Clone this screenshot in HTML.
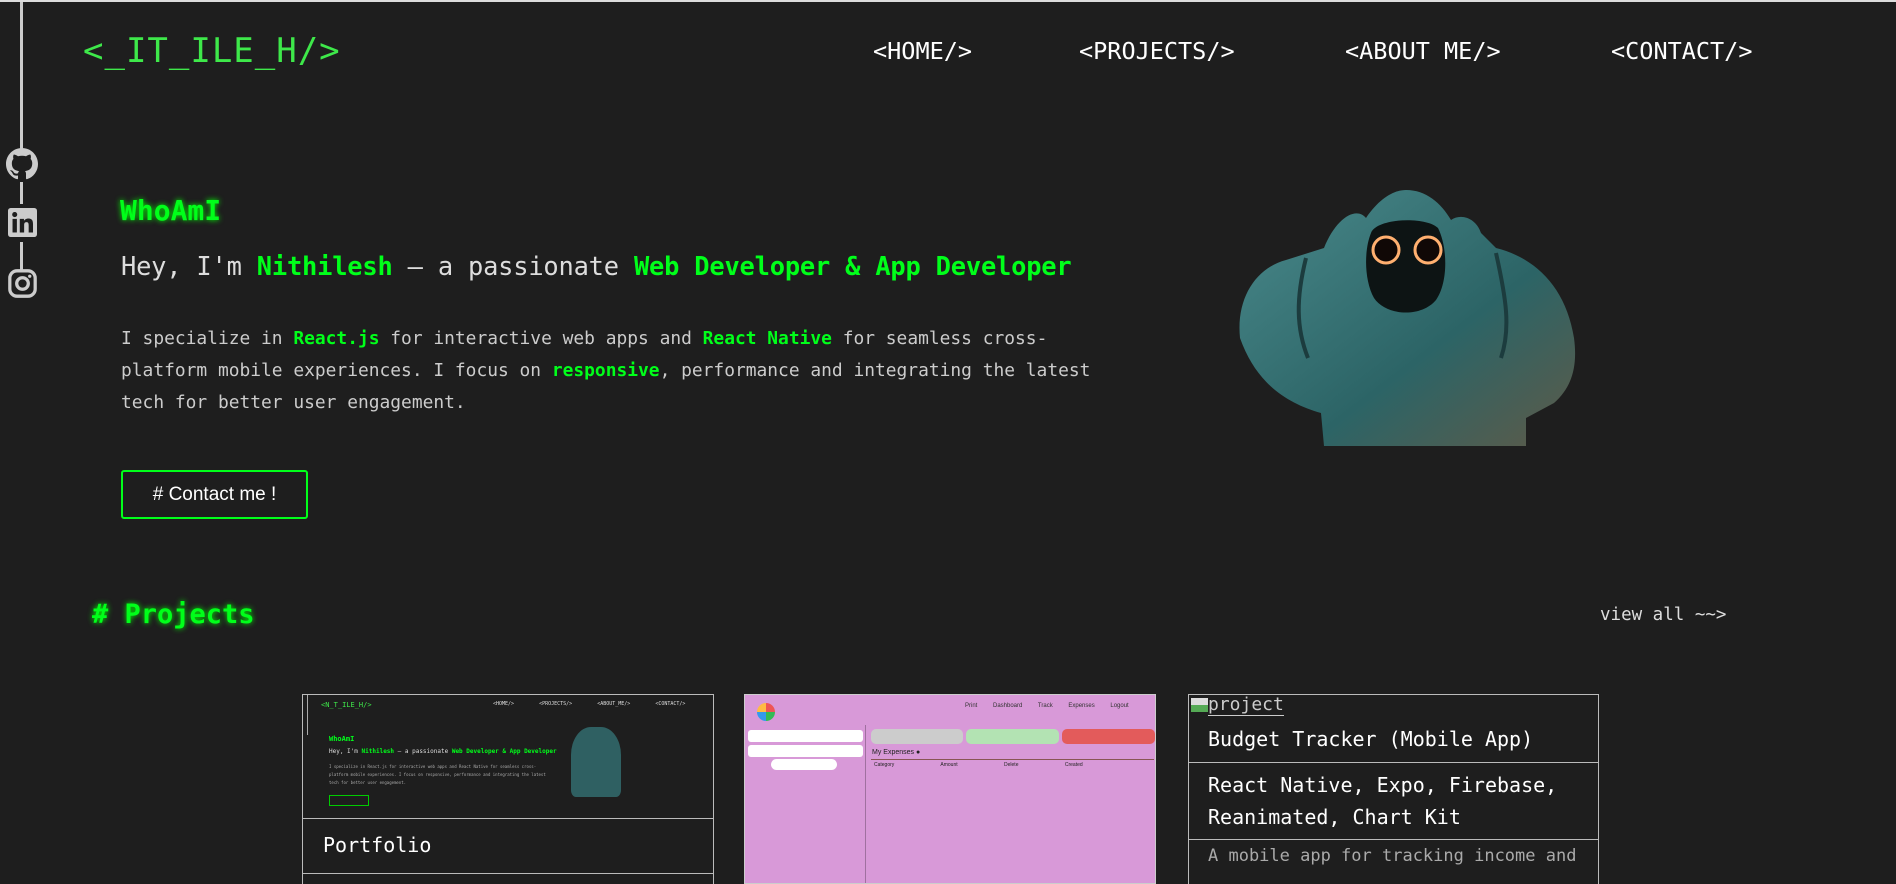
<!DOCTYPE html>
<html><head><meta charset="utf-8"><style>
*{margin:0;padding:0;box-sizing:border-box}
body{width:1896px;height:871px;overflow:hidden;background:#1e1e1e;font-family:"DejaVu Sans Mono","Liberation Mono",monospace;color:#ddd;position:relative;border-top:2px solid #ddd}
.a{position:absolute;white-space:nowrap}
.g{color:#00ff1a;font-weight:bold}
.nav{font-size:23.5px;color:#fff;top:35px;letter-spacing:0px}
</style></head><body>
<div class="a" style="left:20px;top:0;width:3px;height:147px;background:#ccc"></div>
<div class="a" style="left:20px;top:180px;width:3px;height:22px;background:#ccc"></div>
<div class="a" style="left:20px;top:240px;width:3px;height:28px;background:#ccc"></div>
<svg class="a" style="left:6px;top:146px" width="32" height="32" viewBox="0 0 16 16"><path fill="#ccc" d="M8 0C3.58 0 0 3.58 0 8c0 3.540 2.29 6.53 5.47 7.59.4.07.55-.17.55-.38 0-.19-.01-.82-.01-1.49-2.01.37-2.530-.49-2.69-.94-.09-.23-.48-.94-.82-1.130-.28-.15-.68-.52-.01-.53.63-.01 1.08.58 1.23.82.72 1.21 1.87.87 2.33.66.07-.52.28-.87.51-1.07-1.78-.2-3.64-.89-3.64-3.95 0-.87.31-1.59.82-2.150-.08-.2-.36-1.02.08-2.12 0 0 .67-.21 2.2.82.64-.18 1.32-.27 2-.27.68 0 1.36.09 2 .27 1.53-1.04 2.2-.82 2.2-.82.44 1.1.16 1.92.08 2.12.51.56.82 1.27.82 2.15 0 3.07-1.87 3.75-3.65 3.95.29.25.54.73.54 1.48 0 1.07-.01 1.93-.01 2.2 0 .21.15.46.55.38A8.013 8.013 0 0016 8c0-4.42-3.58-8-8-8z"/></svg>
<svg class="a" style="left:8px;top:206px" width="29" height="29" viewBox="0 0 16 16"><rect width="16" height="16" rx="1.5" fill="#ccc"/><rect x="2.5" y="6" width="2.4" height="7.5" fill="#1e1e1e"/><circle cx="3.7" cy="3.6" r="1.4" fill="#1e1e1e"/><path d="M6.5 6h2.3v1.1c.4-.7 1.3-1.3 2.5-1.3 2.1 0 2.5 1.4 2.5 3.2v4.5h-2.4V9.6c0-.9-.1-1.8-1.2-1.8s-1.3.8-1.3 1.7v4H6.5z" fill="#1e1e1e"/></svg>
<svg class="a" style="left:8px;top:267px" width="29" height="29" viewBox="0 0 16 16"><rect x="1" y="1" width="14" height="14" rx="4" fill="none" stroke="#ccc" stroke-width="1.8"/><circle cx="8" cy="8" r="3.2" fill="none" stroke="#ccc" stroke-width="1.8"/><circle cx="12" cy="4" r=".9" fill="#ccc"/></svg>

<div class="a" style="left:83px;top:29px;font-size:34px;color:#3ee84a;letter-spacing:1px">&lt;_IT_ILE_H/&gt;</div>
<div class="a nav" style="left:873px">&lt;HOME/&gt;</div>
<div class="a nav" style="left:1079px">&lt;PROJECTS/&gt;</div>
<div class="a nav" style="left:1345px">&lt;ABOUT ME/&gt;</div>
<div class="a nav" style="left:1611px">&lt;CONTACT/&gt;</div>

<div class="a g" style="left:120px;top:192px;font-size:28px;text-shadow:0 0 6px #0f0">WhoAmI</div>
<div class="a" style="left:121px;top:249px;font-size:25.4px;color:#ddd;letter-spacing:-0.2px">Hey, I'm <span class="g">Nithilesh</span> – a passionate <span class="g">Web Developer &amp; App Developer</span></div>
<div class="a" style="left:121px;top:321px;font-size:17.9px;line-height:32px;color:#ccc;white-space:normal;width:1100px">I specialize in <span class="g">React.js</span> for interactive web apps and <span class="g">React Native</span> for seamless cross-<br>platform mobile experiences. I focus on <span class="g">responsive</span>, performance and integrating the latest<br>tech for better user engagement.</div>
<div class="a" style="left:121px;top:468px;width:187px;height:49px;border:2px solid #00ff1a;border-radius:3px;color:#fff;font-family:'Liberation Sans',sans-serif;font-size:19px;text-align:center;line-height:45px">#&nbsp;Contact me !</div>

<svg class="a" style="left:1236px;top:186px" width="342" height="258" viewBox="0 0 342 258">
<defs><linearGradient id="b" x1="0" y1="0" x2="1" y2="1"><stop offset="0" stop-color="#4a8a8c"/><stop offset=".6" stop-color="#2c6466"/><stop offset="1" stop-color="#5e5a48"/></linearGradient></defs>
<path d="M4 150 C0 110 20 80 50 72 L88 60 C100 30 120 18 130 30 C145 8 160 2 170 2 C190 2 205 15 215 32 C225 25 240 30 245 45 L260 60 C300 70 330 100 338 150 C342 180 335 200 318 215 L290 230 L290 258 L88 258 L85 225 C50 215 20 195 4 150Z" fill="url(#b)"/>
<path d="M70 70 C60 110 60 140 72 170" stroke="#1c3c3e" stroke-width="4" fill="none"/>
<path d="M260 65 C270 110 275 140 265 170" stroke="#1c3c3e" stroke-width="4" fill="none"/>
<path d="M135 45 C140 30 190 28 202 40 C212 60 212 95 200 112 C185 130 150 128 138 110 C128 92 128 62 135 45Z" fill="#0d1414"/>
<circle cx="150" cy="62" r="13" fill="#100806" stroke="#ffb070" stroke-width="3"/>
<circle cx="192" cy="62" r="13" fill="#100806" stroke="#ffb070" stroke-width="3"/>
</svg>

<div class="a g" style="left:92px;top:597px;font-size:27px;text-shadow:0 0 6px #0f0">#&nbsp;Projects</div>
<div class="a" style="left:1600px;top:603px;font-size:17.5px;color:#ddd">view all ~~&gt;</div>

<!-- card 1 -->
<div class="a" style="left:302px;top:692px;width:412px;height:190px;border:1px solid #bbb;border-bottom:none">
 <div style="height:124px;background:#1e1e1e;border-bottom:1px solid #bbb;position:relative;overflow:hidden">
  <div class="a" style="left:18px;top:6px;font-size:7px;color:#3ee84a">&lt;N_T_ILE_H/&gt;</div>
  <div class="a" style="left:190px;top:6px;font-size:5px;color:#ddd;word-spacing:22px">&lt;HOME/&gt; &lt;PROJECTS/&gt; &lt;ABOUT_ME/&gt; &lt;CONTACT/&gt;</div>
  <div class="a" style="left:4px;top:0;width:1px;height:40px;background:#aaa"></div>
  <div class="a g" style="left:26px;top:40px;font-size:7px">WhoAmI</div>
  <div class="a" style="left:26px;top:53px;font-size:6px">Hey, I'm <span class="g">Nithilesh</span> – a passionate <span class="g">Web Developer &amp; App Developer</span></div>
  <div class="a" style="left:26px;top:68px;font-size:4px;color:#aaa;line-height:8px">I specialize in React.js for interactive web apps and React Native for seamless cross-<br>platform mobile experiences. I focus on responsive, performance and integrating the latest<br>tech for better user engagement.</div>
  <div class="a" style="left:26px;top:100px;width:40px;height:11px;border:1px solid #0c0"></div>
  <div class="a" style="left:268px;top:32px;width:50px;height:70px;background:#2f6062;border-radius:40% 40% 10% 10%"></div>
 </div>
 <div style="height:55px;border-bottom:1px solid #bbb;font-size:20px;color:#fff;padding:14px 20px">Portfolio</div>
</div>
<!-- card 2 -->
<div class="a" style="left:744px;top:692px;width:412px;height:190px;background:#d899d8;border:1px solid #ccc;overflow:hidden">
 <div class="a" style="left:12px;top:8px;width:18px;height:18px;border-radius:50%;background:conic-gradient(#e55 0 25%,#3b5 0 50%,#39e 0 75%,#fb4 0)"></div>
 <div class="a" style="left:220px;top:8px;font-size:6px;color:#333;font-family:'Liberation Sans';word-spacing:14px">Print Dashboard Track Expenses Logout</div>
 <div class="a" style="left:3px;top:35px;width:115px;height:12px;background:#fff;border-radius:3px"></div>
 <div class="a" style="left:3px;top:50px;width:115px;height:12px;background:#fff;border-radius:3px"></div>
 <div class="a" style="left:26px;top:64px;width:66px;height:11px;background:#fff;border-radius:6px"></div>
 <div class="a" style="left:120px;top:30px;width:1px;height:170px;background:#a070a0"></div>
 <div class="a" style="left:126px;top:34px;width:92px;height:15px;background:#ccc;border-radius:5px"></div>
 <div class="a" style="left:221px;top:34px;width:93px;height:15px;background:#b3e3b3;border-radius:5px"></div>
 <div class="a" style="left:317px;top:34px;width:93px;height:15px;background:#e35b5b;border-radius:5px"></div>
 <div class="a" style="left:127px;top:54px;font-size:7px;color:#222;font-family:'Liberation Sans'">My Expenses ●</div>
 <div class="a" style="left:126px;top:64px;width:283px;height:1px;background:#855"></div>
 <div class="a" style="left:129px;top:67px;font-size:5px;color:#222;font-family:'Liberation Sans';word-spacing:45px">Category Amount Delete Created</div>
</div>
<!-- card 3 -->
<div class="a" style="left:1188px;top:692px;width:411px;height:190px;border:1px solid #bbb;border-bottom:none">
 <div style="height:23px;font-size:18px;color:#ccc;padding-left:2px;line-height:20px"><span style="display:inline-block;width:17px;height:14px;background:linear-gradient(#ddd 50%,#5a5 50%);vertical-align:-2px"></span><span style="border-bottom:1px solid #ccc">project</span></div>
 <div style="height:45px;border-bottom:1px solid #bbb;font-size:20px;color:#fff;padding:9px 19px 0">Budget Tracker (Mobile App)</div>
 <div style="height:77px;border-bottom:1px solid #bbb;font-size:20px;color:#fff;padding:6px 19px 0;line-height:32px">React Native, Expo, Firebase,<br>Reanimated, Chart Kit</div>
 <div style="font-size:17px;color:#aaa;padding:6px 19px">A mobile app for tracking income and</div>
</div>
</body></html>
